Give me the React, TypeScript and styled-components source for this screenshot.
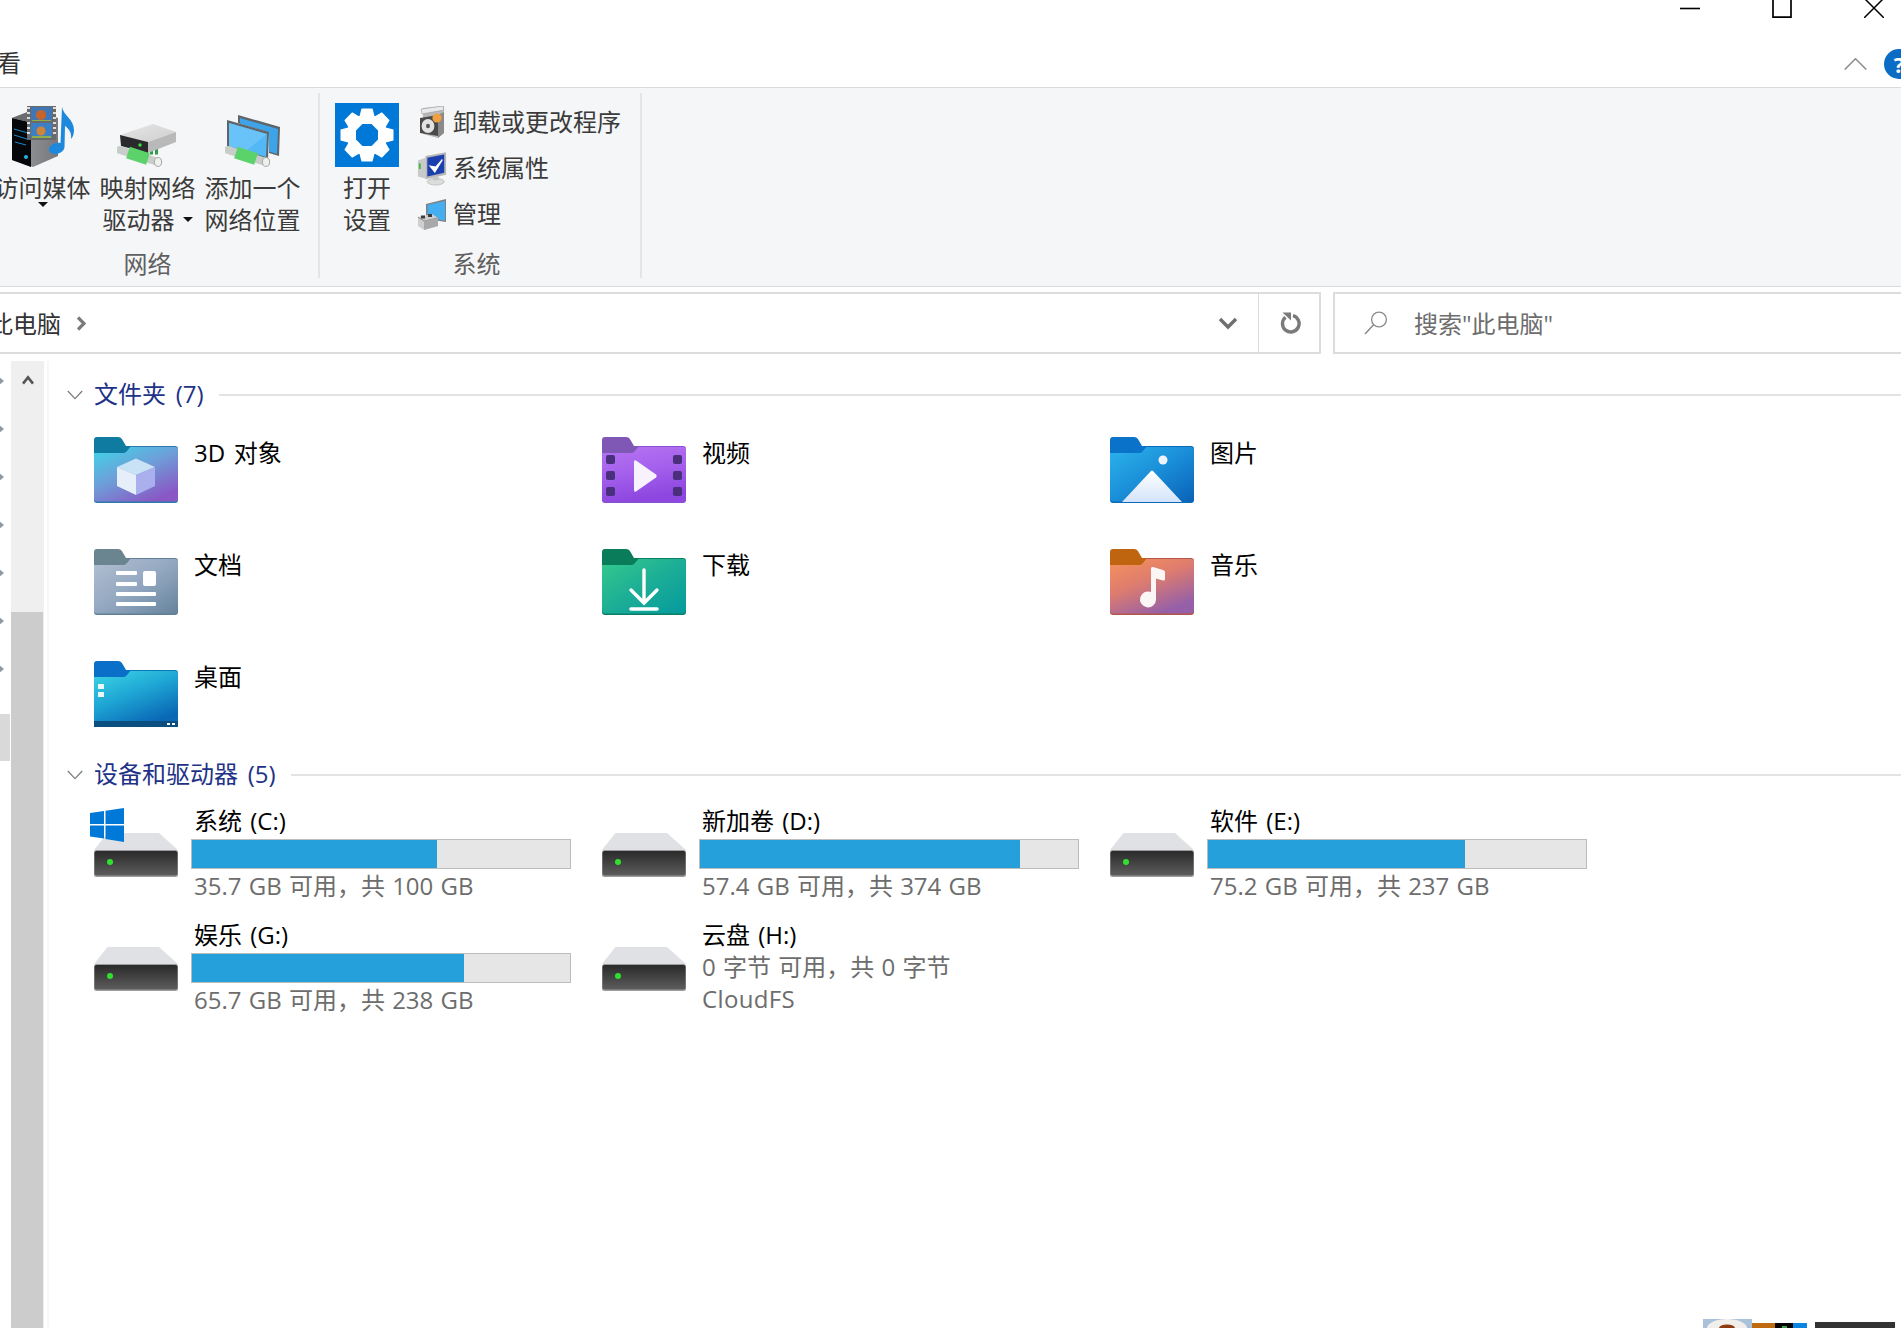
import React from 'react';
import styled, { createGlobalStyle } from 'styled-components';

const FONT = `"Open Sans", "Noto Sans CJK SC", sans-serif`;

const GlobalStyle = createGlobalStyle`
  html, body {
    margin: 0;
    padding: 0;
    background: #fff;
    overflow: hidden;
  }
  * { box-sizing: border-box; }
`;

const Page = styled.div`
  position: relative;
  width: 1901px;
  height: 1328px;
  overflow: hidden;
  display: flex;
  flex-direction: column;
  font-family: ${FONT};
  font-size: 24px;
  color: #000;
`;

/* ---------- title + tabs ---------- */

const CaptionBar = styled.div`
  height: 40px;
  flex: none;
  display: flex;
  justify-content: flex-end;
  margin-right: -19px;
`;

const CaptionButton = styled.div`
  width: 92px;
  display: flex;
  justify-content: center;
  align-items: flex-start;
`;

const TabRow = styled.div`
  height: 47px;
  flex: none;
  display: flex;
  align-items: center;
`;

const Tab = styled.span`
  margin-left: -3px;
  margin-bottom: 2px;
  line-height: 44px;
  color: #333;
`;

const TabTools = styled.div`
  margin-left: auto;
  display: flex;
  align-items: center;
  gap: 17px;
  margin-right: -13px;
`;

const HelpDot = styled.div`
  width: 30px;
  height: 30px;
  border-radius: 50%;
  background: #0a6cc4;
  color: #fff;
  font-size: 22px;
  font-weight: 700;
  line-height: 30px;
  text-align: center;
`;

/* ---------- ribbon ---------- */

const Ribbon = styled.div`
  height: 200px;
  flex: none;
  display: flex;
  background: #f5f6f7;
  border-top: 1px solid #dadbdc;
  border-bottom: 1px solid #dadbdc;
  padding-top: 5px;
`;

const Group = styled.div<{ $shift?: number; $pad: number }>`
  height: 185px;
  display: flex;
  flex-direction: column;
  margin-left: ${p => p.$shift ?? 0}px;
  padding-right: ${p => p.$pad}px;
  border-right: 2px solid #e3e5e8;
  box-sizing: content-box;
`;

const GroupBody = styled.div<{ $inset?: number }>`
  display: flex;
  flex: 1;
  padding-left: ${p => p.$inset ?? 0}px;
`;

const GroupLabel = styled.div`
  height: 26px;
  line-height: 24px;
  text-align: center;
  color: #5f5f5f;
`;

const BigButton = styled.div<{ $width: number }>`
  width: ${p => p.$width}px;
  display: flex;
  flex-direction: column;
  align-items: center;
  padding-top: 10px;
  flex: none;
`;

const BigIcon = styled.div`
  height: 64px;
  width: 64px;
  flex: none;
  display: flex;
  align-items: flex-end;
  justify-content: center;
  margin-bottom: 5px;
`;

const BigLabel = styled.div`
  line-height: 32px;
  color: #3b3b3b;
  text-align: center;
  white-space: nowrap;
`;

const Caret = styled.span`
  display: inline-block;
  width: 0;
  height: 0;
  border-left: 5px solid transparent;
  border-right: 5px solid transparent;
  border-top: 5px solid #111;
  vertical-align: middle;
`;

const InlineCaret = styled(Caret)`
  margin-left: 8px;
  margin-top: -6px;
`;

const BlockCaret = styled(Caret)`
  display: block;
  margin: -2px auto 0;
`;

const CommandList = styled.div`
  display: flex;
  flex-direction: column;
  margin-left: 18px;
  margin-right: 12px;
  padding-top: 7px;
`;

const Command = styled.div`
  height: 46px;
  display: flex;
  align-items: center;
  gap: 6px;
  color: #3b3b3b;
  white-space: nowrap;
`;

const CommandText = styled.span`
  margin-bottom: 5px;
`;

/* ---------- address bar ---------- */

const AddressRow = styled.div`
  flex: none;
  height: 62px;
  margin-top: 5px;
  display: flex;
`;

const PathBox = styled.div`
  width: 1321px;
  flex: none;
  display: flex;
  align-items: stretch;
  border-top: 2px solid #dcdcdc;
  border-bottom: 2px solid #dcdcdc;
  border-right: 2px solid #dcdcdc;
`;

const Crumbs = styled.div`
  flex: 1;
  display: flex;
  align-items: center;
  gap: 15px;
  margin-left: -11px;
  color: #333;
`;

const CrumbText = styled.span`
  margin-bottom: 2px;
`;

const PathCell = styled.div<{ $width: number; $divider?: boolean }>`
  width: ${p => p.$width}px;
  flex: none;
  display: flex;
  align-items: center;
  justify-content: center;
  padding-left: ${p => (p.$divider ? 3 : 0)}px;
  border-left: ${p => (p.$divider ? '1px solid #dcdcdc' : 'none')};
`;

const SearchBox = styled.div`
  flex: 1;
  margin-left: 12px;
  display: flex;
  align-items: center;
  gap: 26px;
  padding-left: 29px;
  border: 2px solid #dcdcdc;
  border-right: none;
  color: #6d6d6d;
`;

/* ---------- main ---------- */

const Main = styled.div`
  flex: 1;
  display: flex;
  min-height: 0;
`;

const NavPane = styled.div`
  width: 11px;
  flex: none;
  padding-top: 3px;
  display: flex;
  flex-direction: column;
`;

const NavRow = styled.div`
  height: 48px;
  flex: none;
  display: flex;
  align-items: center;
`;

const NavArrow = styled.span`
  width: 0;
  height: 0;
  margin-left: -2px;
  border-top: 5px solid transparent;
  border-bottom: 5px solid transparent;
  border-left: 6px solid #8a9aa3;
`;

const NavSelected = styled.div`
  width: 10px;
  height: 47px;
  margin-top: 21px;
  flex: none;
  background: #d9d9d9;
`;

const ScrollTrack = styled.div`
  width: 33px;
  flex: none;
  margin-top: 7px;
  background: #efefef;
  display: flex;
  flex-direction: column;
`;

const ScrollUp = styled.div`
  height: 251px;
  flex: none;
  display: flex;
  justify-content: center;
  padding-top: 14px;
`;

const ScrollThumb = styled.div`
  flex: 1;
  width: 32px;
  background: #cccccc;
`;

const PaneLine = styled.div`
  width: 2px;
  flex: none;
  margin: 7px 0 0 3px;
  background: #f7f7f7;
`;

const Content = styled.div`
  flex: 1;
  min-width: 0;
  padding: 26px 0 0 45px;
`;

const SectionHeader = styled.div<{ $top?: number }>`
  height: 30px;
  margin-left: -27px;
  margin-top: ${p => p.$top ?? 0}px;
  display: flex;
  align-items: center;
  color: #1e3287;
  white-space: nowrap;
`;

const SectionTitle = styled.span`
  margin-left: 11px;
  margin-bottom: 5px;
  word-spacing: 3.5px;
`;

const SectionRule = styled.div`
  flex: 1;
  height: 2px;
  margin-left: 15px;
  background: #e3e3e3;
`;

const TileGrid = styled.div<{ $top: number; $gap: number }>`
  display: grid;
  grid-template-columns: repeat(3, 508px);
  margin-top: ${p => p.$top}px;
  row-gap: ${p => p.$gap}px;
`;

const FolderTile = styled.div`
  display: flex;
  gap: 16px;
  height: 66px;
`;

const FolderName = styled.div`
  line-height: 32px;
  word-spacing: 2.5px;
`;

const DriveTile = styled.div`
  display: flex;
  gap: 13px;
  height: 95px;
`;

const DriveArt = styled.div`
  position: relative;
  width: 84px;
  flex: none;
  padding-top: 26px;
`;

const WinBadge = styled.div`
  position: absolute;
  left: -4px;
  top: 1px;
`;

const DriveInfo = styled.div`
  width: 380px;
  flex: none;
`;

const DriveName = styled.div`
  height: 32px;
  line-height: 27px;
  padding-left: 3px;
  white-space: nowrap;
  word-spacing: 2px;
`;

const Meter = styled.div`
  height: 30px;
  border: 1px solid #bcbcbc;
  background: #e6e6e6;
`;

const MeterFill = styled.div`
  height: 100%;
  background: #26a0da;
`;

const DriveDetail = styled.div<{ $top: number; $tight?: boolean }>`
  line-height: 32px;
  padding-left: 3px;
  color: #6d6d6d;
  white-space: nowrap;
  word-spacing: 1px;
  letter-spacing: ${p => (p.$tight ? 0.35 : 0)}px;
  margin-top: ${p => p.$top}px;
`;

const DesktopPeek = styled.div`
  position: absolute;
  right: 0;
  bottom: 0;
  line-height: 0;
`;

/* ---------- drawings ---------- */

const MinIcon = () => (
  <svg width="20" height="18" viewBox="0 0 20 18">
    <path d="M0 8.5h20" stroke="#000" strokeWidth="1.6" />
  </svg>
);

const MaxIcon = () => (
  <svg width="20" height="18" viewBox="0 0 20 18">
    <path d="M1 -2h18v19.200H1z" fill="none" stroke="#000" strokeWidth="1.7" />
  </svg>
);

const CloseIcon = () => (
  <svg width="20" height="18" viewBox="0 0 20 18">
    <path d="M0 -2 20 18M20 -2 0 18" stroke="#000" strokeWidth="1.5" />
  </svg>
);

const ChevronUp = () => (
  <svg width="23" height="12" viewBox="0 0 23 12">
    <path d="M.7 11.500 11.500.8l10.800 10.700" fill="none" stroke="#8f8f8f" strokeWidth="1.6" />
  </svg>
);

const BreadcrumbChevron = () => (
  <svg width="10" height="15" viewBox="0 0 10 15">
    <path d="M2 1.500 8 7.500l-6 6" fill="none" stroke="#7b7b7b" strokeWidth="3.200" />
  </svg>
);

const DropChevron = () => (
  <svg width="20" height="14" viewBox="0 0 20 14">
    <path d="M2 3l8 8 8-8" fill="none" stroke="#6f6f6f" strokeWidth="3.400" />
  </svg>
);

const RefreshIcon = () => (
  <svg width="22" height="22" viewBox="0 0 22 22">
    <path d="M5.500 5.200A8.300 8.300 0 1 0 13 3.600" fill="none" stroke="#7a7a7a" strokeWidth="3.400" />
    <path d="M2.500 0.500h8.500v8z" fill="#7a7a7a" />
  </svg>
);

const SearchIcon = () => (
  <svg width="24" height="24" viewBox="0 0 24 24">
    <circle cx="15" cy="8.500" r="7.400" fill="none" stroke="#8a8a8a" strokeWidth="1.300" />
    <path d="M9.600 13.800 1 23" stroke="#8a8a8a" strokeWidth="1.500" />
  </svg>
);

const SectionChevron = () => (
  <svg width="16" height="10" viewBox="0 0 16 10">
    <path d="M.8 1 8 8.600 15.200 1" fill="none" stroke="#7d7d7d" strokeWidth="1.300" />
  </svg>
);

const ScrollUpIcon = () => (
  <svg width="12" height="10" viewBox="0 0 12 10">
    <path d="M1 8.600 6 2.400l5 6.200" fill="none" stroke="#565656" strokeWidth="2.600" />
  </svg>
);

const GearIcon = () => (
  <svg width="64" height="64" viewBox="0 0 64 64">
    <rect width="64" height="64" fill="#0078d7" />
    {[0, 45, 90, 135, 180, 225, 270, 315].map(a => (
      <path key={a} d="M26.500 5.500h11l2.500 9.500v6H24v-6z" fill="#fff" transform={`rotate(${a} 32 32)`} />
    ))}
    <circle cx="32" cy="32" r="16.500" fill="none" stroke="#fff" strokeWidth="7.500" />
  </svg>
);

const MediaIcon = () => (
  <svg width="64" height="62" viewBox="0 0 64 62">
    <defs>
      <linearGradient id="towerSide" x1="0" y1="0" x2="1" y2="0">
        <stop offset="0" stopColor="#9c9ca0" />
        <stop offset="1" stopColor="#77787c" />
      </linearGradient>
    </defs>
    <path d="M1 13 22 5l25 8v38L22 62 1 55z" fill="url(#towerSide)" />
    <path d="M1 13 20 17.500V62L1 55z" fill="#05070b" />
    <path d="M1 13 22 5l14 3-16 9.500z" fill="#6b6c70" />
    <path d="M3 24l14 4M3 30l13 4M4 37l11 3" stroke="#1b88c8" strokeWidth="1" />
    <circle cx="15" cy="52" r="2" fill="#29b6d8" />
    <rect x="16" y="1" width="29" height="34" fill="#6a6a6a" />
    <rect x="20" y="2" width="21" height="14" fill="#3f77b5" />
    <rect x="20" y="18" width="21" height="15" fill="#3d7fc4" />
    <circle cx="30" cy="10" r="5" fill="#c8642a" />
    <circle cx="30" cy="26" r="4.500" fill="#d0843a" />
    <path d="M21 15h19v1H21zM21 31h19v2H21z" fill="#8fae4d" />
    <path d="M16 3h3M16 8h3M16 13h3M16 18h3M16 23h3M16 28h3M42 3h3M42 8h3M42 13h3M42 18h3M42 23h3M42 28h3" stroke="#ddd" strokeWidth="2" />
    <path d="M51 2c1 8 12 12 12 23 0 4-1 7-3 9 1-7-3-11-6-13l-.5 21c0 4-6 8-11 7s-6-5-3-8 7-4 10-3z" fill="#1e88dc" />
  </svg>
);

const GreenPipe = ({ x, y }: { x: number; y: number }) => (
  <g transform={`translate(${x} ${y})`}>
    <path d="M3 2 41 14" stroke="#c9cdc9" strokeWidth="8" strokeLinecap="round" />
    <path d="M11 4.500 31 11" stroke="#5cd36a" strokeWidth="12" />
    <ellipse cx="41" cy="14" rx="3.600" ry="4.400" fill="#eef0ee" stroke="#a7a9a7" />
  </g>
);

const MapDriveIcon = () => (
  <svg width="62" height="44" viewBox="0 0 62 44">
    <defs>
      <linearGradient id="driveTop" x1="0" y1="0" x2="1" y2="1">
        <stop offset="0" stopColor="#e6e6e6" />
        <stop offset="1" stopColor="#cfcfcf" />
      </linearGradient>
    </defs>
    <path d="M28 28h13" stroke="#2f9c4d" strokeWidth="7" strokeDasharray="3 2" />
    <path d="M3 12 36 1l23 8-28 10z" fill="url(#driveTop)" />
    <path d="M31 19 59 9v10L31 30z" fill="#b9b9b9" />
    <path d="M3 12l28 7v11L4 23z" fill="#2a2a2c" />
    <circle cx="23" cy="22" r="1.700" fill="#33e24b" />
    <GreenPipe x={0} y={25} />
  </svg>
);

const AddLocationIcon = () => (
  <svg width="56" height="52" viewBox="0 0 56 52">
    <path d="M13 0 55 12l-1 29-10-3V17L13 8z" fill="#5e6468" />
    <path d="M15 3 53 14l-1 25-8-2.500V17L15 8.500z" fill="#3ea4ea" />
    <path d="M2 5 44 17l-1 28L2 33z" fill="#5e6468" />
    <path d="M4 8 42 19l-1 23L4 31.500z" fill="#53b8f6" />
    <path d="M4 8 42 19 21 36 4 31.500z" fill="#7fcdfb" opacity="0.5" />
    <GreenPipe x={0} y={33} />
  </svg>
);

const UninstallIcon = () => (
  <svg width="30" height="34" viewBox="0 0 30 34">
    <path d="M6 2 27 0v27L21 32 6 28z" fill="#b8b8b8" />
    <path d="M4 3 26 0l1 4L5 8z" fill="#eaeaea" stroke="#9a9a9a" strokeWidth="0.600" />
    <path d="M21 9 27 6v21L21 32z" fill="#8a8a8a" />
    <path d="M3 12 21 9v21L3 27z" fill="#4a4a4a" />
    <ellipse cx="11" cy="20" rx="6.400" ry="7" fill="#e3e3e3" />
    <ellipse cx="11" cy="20" rx="2" ry="2.200" fill="#555" />
    <circle cx="20" cy="12" r="4.600" fill="#f0a040" />
  </svg>
);

const SystemIcon = () => (
  <svg width="30" height="34" viewBox="0 0 32 36">
    <path d="M1 9 9 6v22l-8-2z" fill="#c9c9c9" />
    <rect x="2" y="12" width="2" height="6" fill="#3dbb3d" />
    <path d="M9 4 31 0v24L9 29z" fill="#b4b6ba" />
    <path d="M11 6 29 2.500v19.500L11 26z" fill="#1c3fae" />
    <path d="M14 15l5 6 8-13-7 8z" fill="#fff" stroke="#fff" strokeWidth="1.400" />
    <ellipse cx="20" cy="31.500" rx="9" ry="3.600" fill="#dcdcdc" stroke="#aaa" strokeWidth="0.600" />
    <rect x="17" y="26" width="6" height="4" fill="#c4c4c4" />
  </svg>
);

const ManageIcon = () => (
  <svg width="30" height="32" viewBox="0 0 30 32">
    <path d="M9 5 29 0v23L9 20z" fill="#7d8185" />
    <path d="M10.500 6 28 2v19.500L10.500 19z" fill="#45aef0" />
    <path d="M1 18 15 15l6 4v8L7 31 1 27z" fill="#cfcfcf" />
    <path d="M1 18 7 22 21 19" stroke="#8d8d8d" strokeWidth="1" fill="none" />
    <path d="M4 16.500h4v3H4zM11 15h4v3h-4z" fill="#3c3c3c" />
    <path d="M7 22v9l14-4v-8z" fill="#a9a9a9" />
  </svg>
);

type FolderKind = 'cube' | 'video' | 'picture' | 'doc' | 'download' | 'music' | 'desktop';

const folderTheme: Record<FolderKind, { tab: string; edge: string; stops: string[]; angle: [number, number] }> = {
  cube: { tab: '#0f7ba0', edge: '#2f79ab', stops: ['#3ed6e8', '#6d9fd8', '#8a57c4'], angle: [0.7, 1] },
  video: { tab: '#7f57b5', edge: '#8a4fd0', stops: ['#b574f2', '#a560ec', '#8d47e0'], angle: [0.25, 1] },
  picture: { tab: '#0a72c8', edge: '#0a6ab8', stops: ['#2cb4ec', '#1a8ed8', '#0a62b6'], angle: [1, 1] },
  doc: { tab: '#6b8590', edge: '#5f7f96', stops: ['#b2bfd2', '#93a8c0', '#66839c'], angle: [1, 1] },
  download: { tab: '#0a7c5a', edge: '#0b7f66', stops: ['#35c98d', '#1cae96', '#049a9e'], angle: [1, 1] },
  music: { tab: '#c0650f', edge: '#b3564a', stops: ['#f7925a', '#dc7b70', '#9560a8'], angle: [0.6, 1] },
  desktop: { tab: '#0a6fc8', edge: '#0a77b8', stops: ['#3cd6e6', '#1ea6d4', '#0a68b6'], angle: [0.6, 1] },
};

const folderArt: Record<FolderKind, React.ReactNode> = {
  cube: (
    <>
      <path d="M42 21.500 61 30 42 38 23 30z" fill="#c9e2f5" />
      <path d="M42 38 61 30v19l-19 9z" fill="#aab0ee" />
      <path d="M23 30 42 38v20l-19-9z" fill="#e6eefa" />
    </>
  ),
  video: (
    <>
      {[22, 38, 54].flatMap(y => [
        <rect key={`l${y}`} x="4" y={y - 4} width="9" height="9" rx="2" fill="#4a2f7c" />,
        <rect key={`r${y}`} x="71" y={y - 4} width="9" height="9" rx="2" fill="#4a2f7c" />,
      ])}
      <path d="M32 25q0-2.500 2-1.500l20 14q1.500 1.500 0 3l-20 14q-2 1-2-1.500z" fill="#f7f2fe" />
    </>
  ),
  picture: (
    <>
      <ellipse cx="53" cy="23" rx="4.500" ry="4.500" fill="#eef3fb" />
      <path d="M12 65 41 34q1-1 2 0l29 31z" fill="url(#peak)" />
    </>
  ),
  doc: (
    <>
      <rect x="22" y="22" width="21" height="4" rx="1" fill="#fff" />
      <rect x="22" y="33" width="21" height="4" rx="1" fill="#fff" />
      <rect x="49" y="22" width="13" height="15" rx="2" fill="#fff" />
      <rect x="22" y="43" width="40" height="4" rx="1" fill="#fff" />
      <rect x="22" y="53" width="40" height="4" rx="1" fill="#fff" />
    </>
  ),
  download: (
    <>
      <path d="M42 21v32M29 41l13 13 13-13" fill="none" stroke="#fff" strokeWidth="3.400" strokeLinecap="round" />
      <path d="M29 60h26" stroke="#fff" strokeWidth="3.600" strokeLinecap="round" />
    </>
  ),
  music: (
    <>
      <path d="M41 19.500q0-2 2-1.500l10 3q2 .5 2 2v7q0 2-2 1.500l-7-2v21a8 8 0 1 1-5-7.500z" fill="#fbf6f6" />
    </>
  ),
  desktop: (
    <>
      <rect x="4" y="23" width="6" height="5" fill="#fff" opacity="0.9" />
      <rect x="4" y="31" width="6" height="5" fill="#fff" opacity="0.9" />
      <rect x="0" y="60" width="84" height="6" fill="#0b4f80" />
      <rect x="73" y="62" width="3" height="2" fill="#fff" />
      <rect x="78" y="62" width="3" height="2" fill="#fff" />
    </>
  ),
};

const FolderIcon = ({ kind }: { kind: FolderKind }) => {
  const t = folderTheme[kind];
  const id = `body-${kind}`;
  return (
    <svg width="84" height="66" viewBox="0 0 84 66">
      <defs>
        <linearGradient id={id} x1="0" y1="0" x2={t.angle[0]} y2={t.angle[1]}>
          <stop offset="0" stopColor={t.stops[0]} />
          <stop offset="0.5" stopColor={t.stops[1]} />
          <stop offset="1" stopColor={t.stops[2]} />
        </linearGradient>
        <linearGradient id="peak" x1="0" y1="0" x2="0" y2="1">
          <stop offset="0" stopColor="#ffffff" />
          <stop offset="1" stopColor="#d4e4fa" />
        </linearGradient>
      </defs>
      <rect x="0" y="9" width="84" height="57" rx="3" fill={t.edge} />
      <path d="M0 11.500q0-1.500 3-1.500h78q3 0 3 1.500V61q0 3.500-3 3.500H3q-3 0-3-3.500z" fill={`url(#${id})`} />
      {folderArt[kind]}
      <path d="M0 16V3q0-3 3-3h21q3 0 4.500 3L32 9h5l-4 5q-1.500 2-3.500 2z" fill={t.tab} />
    </svg>
  );
};

const DriveIcon = () => (
  <svg width="84" height="44" viewBox="0 0 84 44" display="block">
    <defs>
      <linearGradient id="driveFace" x1="0" y1="0" x2="0" y2="1">
        <stop offset="0" stopColor="#2a2a2a" />
        <stop offset="1" stopColor="#5d5d5d" />
      </linearGradient>
    </defs>
    <path d="M0 17 13.500 0h51.500L84 17z" fill="#e0e1e4" />
    <rect x="0" y="17" width="84" height="27" rx="2.500" fill="#9c9c9c" />
    <rect x="0.500" y="18" width="83" height="24.500" rx="2" fill="url(#driveFace)" />
    <circle cx="16" cy="29" r="3" fill="#2fe02f" />
  </svg>
);

const WinLogo = () => (
  <svg width="34" height="34" viewBox="0 0 34 34" display="block">
    <path d="M0 5l14-2v13H0zM15.500 2.700 34 0v16H15.500zM0 17.500h14v13l-14-2zM15.500 17.500H34V34l-18.500-3z" fill="#0078d7" />
  </svg>
);

const PeekStrip = () => (
  <svg width="198" height="9" viewBox="0 0 198 9" display="block">
    <rect x="0" y="0" width="49" height="9" fill="#a9c2da" />
    <ellipse cx="24" cy="9" rx="20" ry="9" fill="#f1efec" />
    <ellipse cx="24" cy="9" rx="8" ry="3.500" fill="#8e3b12" />
    <rect x="49" y="4" width="23" height="5" fill="#c06a10" />
    <rect x="72" y="4" width="18" height="5" fill="#000" />
    <rect x="79" y="7" width="5" height="2" fill="#3aa04a" />
    <rect x="90" y="4" width="14" height="5" fill="#0a84e0" />
    <rect x="112" y="3" width="80" height="6" fill="#333" />
  </svg>
);

/* ---------- data ---------- */

const folders: { name: string; kind: FolderKind }[] = [
  { name: '3D 对象', kind: 'cube' },
  { name: '视频', kind: 'video' },
  { name: '图片', kind: 'picture' },
  { name: '文档', kind: 'doc' },
  { name: '下载', kind: 'download' },
  { name: '音乐', kind: 'music' },
  { name: '桌面', kind: 'desktop' },
];

const drives = [
  { name: '系统 (C:)', used: 64.8, detail: '35.7 GB 可用，共 100 GB', system: true },
  { name: '新加卷 (D:)', used: 84.6, detail: '57.4 GB 可用，共 374 GB' },
  { name: '软件 (E:)', used: 68, detail: '75.2 GB 可用，共 237 GB' },
  { name: '娱乐 (G:)', used: 72, detail: '65.7 GB 可用，共 238 GB' },
  { name: '云盘 (H:)', detail: '0 字节 可用，共 0 字节', extra: 'CloudFS' },
];

export default function App() {
  return (
    <Page>
      <GlobalStyle />
      <CaptionBar>
        <CaptionButton><MinIcon /></CaptionButton>
        <CaptionButton><MaxIcon /></CaptionButton>
        <CaptionButton><CloseIcon /></CaptionButton>
      </CaptionBar>
      <TabRow>
        <Tab>看</Tab>
        <TabTools>
          <ChevronUp />
          <HelpDot>?</HelpDot>
        </TabTools>
      </TabRow>

      <Ribbon>
        <Group $shift={-10} $pad={13}>
          <GroupBody>
            <BigButton $width={105}>
              <BigIcon><MediaIcon /></BigIcon>
              <BigLabel>访问媒体<BlockCaret /></BigLabel>
            </BigButton>
            <BigButton $width={105}>
              <BigIcon><MapDriveIcon /></BigIcon>
              <BigLabel>映射网络<br />驱动器<InlineCaret /></BigLabel>
            </BigButton>
            <BigButton $width={105}>
              <BigIcon><AddLocationIcon /></BigIcon>
              <BigLabel>添加一个<br />网络位置</BigLabel>
            </BigButton>
          </GroupBody>
          <GroupLabel>网络</GroupLabel>
        </Group>
        <Group $pad={7}>
          <GroupBody $inset={15}>
            <BigButton $width={64}>
              <BigIcon><GearIcon /></BigIcon>
              <BigLabel>打开<br />设置</BigLabel>
            </BigButton>
            <CommandList>
              <Command><UninstallIcon /><CommandText>卸载或更改程序</CommandText></Command>
              <Command><SystemIcon /><CommandText>系统属性</CommandText></Command>
              <Command><ManageIcon /><CommandText>管理</CommandText></Command>
            </CommandList>
          </GroupBody>
          <GroupLabel>系统</GroupLabel>
        </Group>
      </Ribbon>

      <AddressRow>
        <PathBox>
          <Crumbs><CrumbText>此电脑</CrumbText><BreadcrumbChevron /></Crumbs>
          <PathCell $width={60}><DropChevron /></PathCell>
          <PathCell $width={61} $divider><RefreshIcon /></PathCell>
        </PathBox>
        <SearchBox><SearchIcon /><CrumbText>搜索"此电脑"</CrumbText></SearchBox>
      </AddressRow>

      <Main>
        <NavPane>
          {[0, 1, 2, 3, 4, 5, 6].map(i => (
            <NavRow key={i}><NavArrow /></NavRow>
          ))}
          <NavSelected />
        </NavPane>
        <ScrollTrack>
          <ScrollUp><ScrollUpIcon /></ScrollUp>
          <ScrollThumb />
        </ScrollTrack>
        <PaneLine />
        <Content>
          <SectionHeader>
            <SectionChevron />
            <SectionTitle>文件夹 (7)</SectionTitle>
            <SectionRule />
          </SectionHeader>
          <TileGrid $top={27} $gap={46}>
            {folders.map(f => (
              <FolderTile key={f.name}>
                <FolderIcon kind={f.kind} />
                <FolderName>{f.name}</FolderName>
              </FolderTile>
            ))}
          </TileGrid>

          <SectionHeader $top={33}>
            <SectionChevron />
            <SectionTitle>设备和驱动器 (5)</SectionTitle>
            <SectionRule />
          </SectionHeader>
          <TileGrid $top={17} $gap={19}>
            {drives.map(d => (
              <DriveTile key={d.name}>
                <DriveArt>
                  <DriveIcon />
                  {d.system && <WinBadge><WinLogo /></WinBadge>}
                </DriveArt>
                <DriveInfo>
                  <DriveName>{d.name}</DriveName>
                  {d.used !== undefined && (
                    <Meter><MeterFill style={{ width: `${d.used}%` }} /></Meter>
                  )}
                  <DriveDetail $top={d.used !== undefined ? 1 : -2}>{d.detail}</DriveDetail>
                  {d.extra && <DriveDetail $top={0} $tight>{d.extra}</DriveDetail>}
                </DriveInfo>
              </DriveTile>
            ))}
          </TileGrid>
        </Content>
      </Main>

      <DesktopPeek><PeekStrip /></DesktopPeek>
    </Page>
  );
}
